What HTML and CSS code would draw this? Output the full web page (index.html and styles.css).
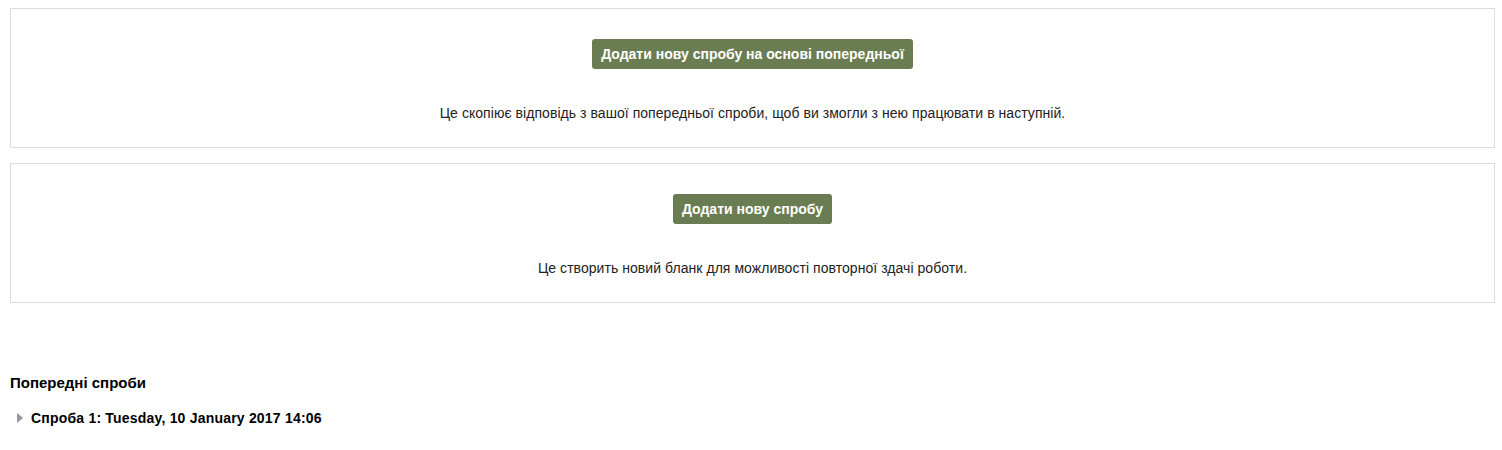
FILE: index.html
```html
<!DOCTYPE html>
<html lang="uk">
<head>
    <meta charset="UTF-8">
    <title>Спроби</title>
    <link rel="stylesheet" href="styles.css">
</head>
<body>

<main class="container">
    <div class="attempt-box">
        <button class="btn-attempt" type="button">Додати нову спробу на основі попередньої</button>
        <p class="attempt-note">Це скопіює відповідь з вашої попередньої спроби, щоб ви змогли з нею працювати в наступній.</p>
    </div>

    <div class="attempt-box">
        <button class="btn-attempt" type="button">Додати нову спробу</button>
        <p class="attempt-note">Це створить новий бланк для можливості повторної здачі роботи.</p>
    </div>

    <section class="previous">
        <h4>Попередні спроби</h4>
        <div class="attempt-toggle">
            <span class="arrow"></span>
            Спроба 1: Tuesday, 10 January 2017 14:06
        </div>
    </section>
</main>

</body>
</html>
```

FILE: styles.css
```css
body {
    font-family: "Liberation Sans", Arial, sans-serif;
    font-size: 14px;
    color: #222;
    margin: 0;
    padding: 0;
    background: #fff;
}
.container {
    padding: 8px 7px 0 10px;
}
.attempt-box {
    border: 1px solid #ddd;
    text-align: center;
    padding: 30px 0 24px;
    margin-bottom: 15px;
}
.btn-attempt {
    font-family: inherit;
    font-size: 14px;
    font-weight: bold;
    line-height: 18px;
    color: #fff;
    background-color: #6a7d52;
    border: none;
    border-radius: 3px;
    padding: 6px 9px;
    cursor: pointer;
}
.attempt-note {
    margin: 34px 0 0;
    line-height: 20px;
    letter-spacing: 0.05px;
}
.previous {
    margin-top: 70px;
}
.previous h4 {
    font-size: 15px;
    line-height: 20px;
    margin: 0 0 15px;
    color: #000;
}
.attempt-toggle {
    font-size: 14px;
    font-weight: bold;
    letter-spacing: 0.2px;
    line-height: 20px;
    color: #000;
    display: flex;
    align-items: center;
    gap: 8px;
    padding-left: 7px;
}
.arrow {
    width: 0;
    height: 0;
    border-top: 5px solid transparent;
    border-bottom: 5px solid transparent;
    border-left: 6px solid #999;
}
```
